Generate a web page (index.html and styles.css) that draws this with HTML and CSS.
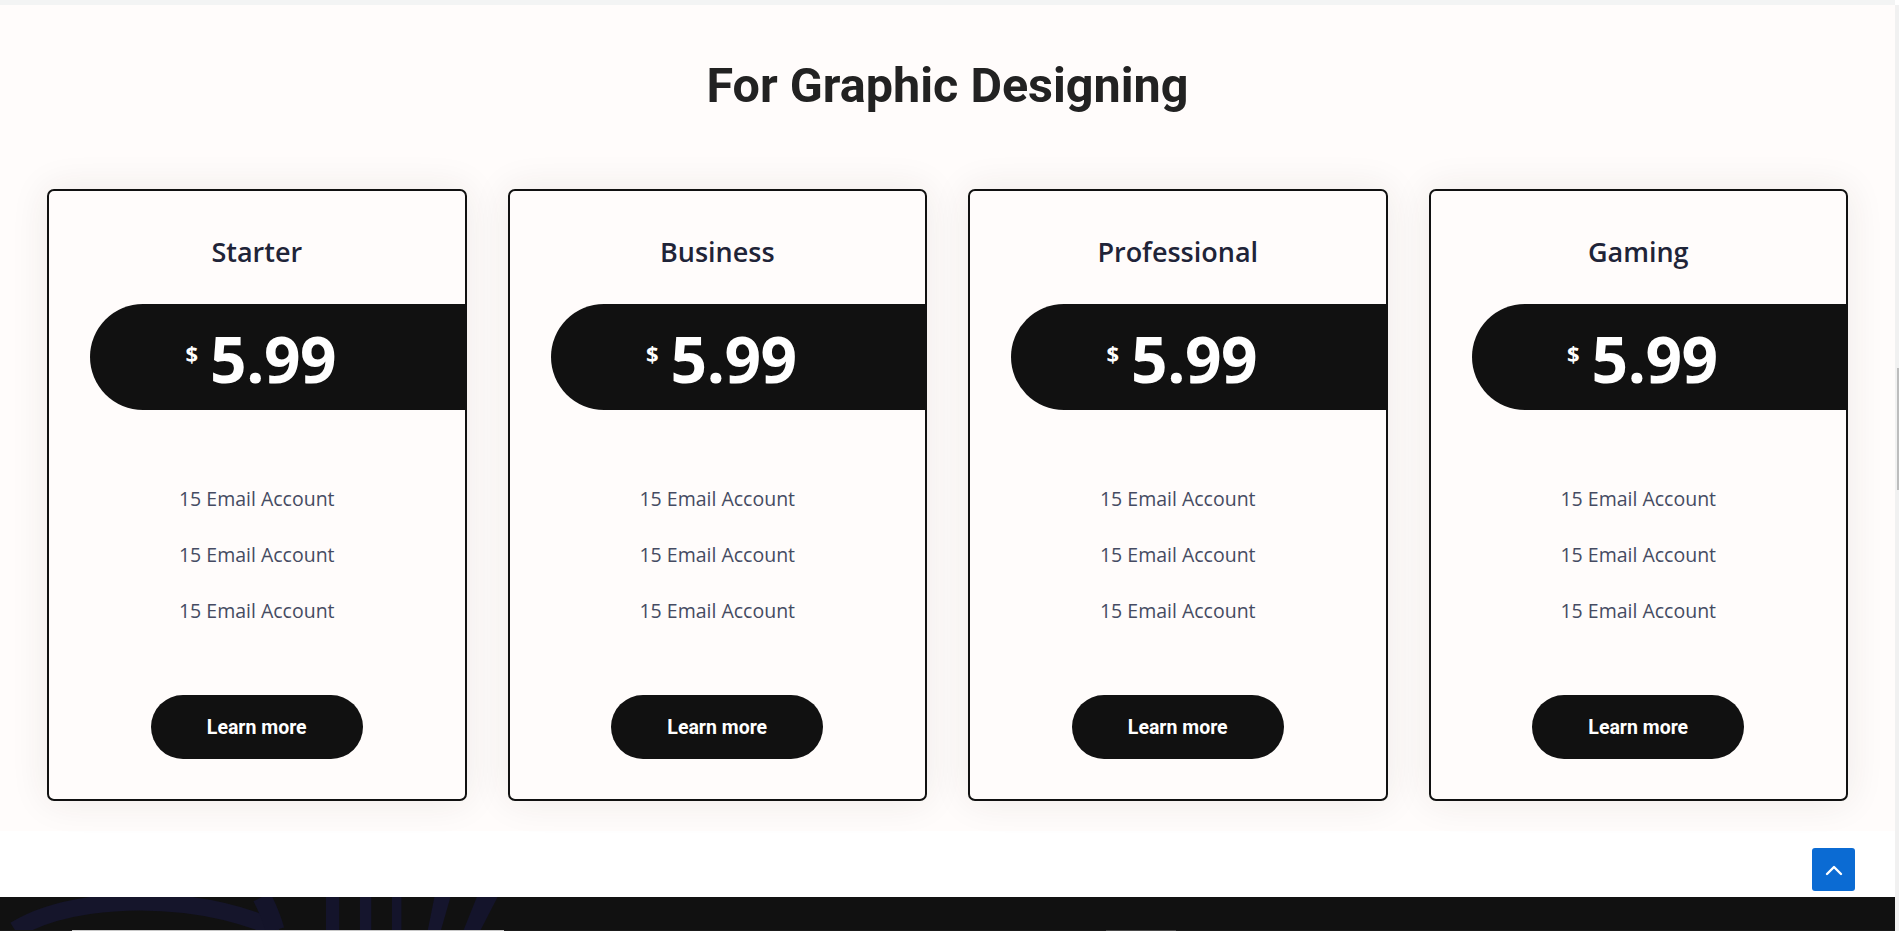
FILE: index.html
```html
<!DOCTYPE html>
<html lang="en">
<head>
<meta charset="utf-8">
<title>For Graphic Designing</title>
<link rel="stylesheet" href="styles.css">
</head>
<body>
<div class="topband"></div>
<section class="pricing">
  <h2 class="heading">For Graphic Designing</h2>
  <div class="cards">
    <div class="card">
      <h3 class="plan">Starter</h3>
      <div class="band"><span class="cur">$</span><span class="amount">5.99</span></div>
      <ul class="features">
        <li>15 Email Account</li>
        <li>15 Email Account</li>
        <li>15 Email Account</li>
      </ul>
      <a class="btn" href="#">Learn more</a>
    </div>
    <div class="card">
      <h3 class="plan">Business</h3>
      <div class="band"><span class="cur">$</span><span class="amount">5.99</span></div>
      <ul class="features">
        <li>15 Email Account</li>
        <li>15 Email Account</li>
        <li>15 Email Account</li>
      </ul>
      <a class="btn" href="#">Learn more</a>
    </div>
    <div class="card">
      <h3 class="plan">Professional</h3>
      <div class="band"><span class="cur">$</span><span class="amount">5.99</span></div>
      <ul class="features">
        <li>15 Email Account</li>
        <li>15 Email Account</li>
        <li>15 Email Account</li>
      </ul>
      <a class="btn" href="#">Learn more</a>
    </div>
    <div class="card">
      <h3 class="plan">Gaming</h3>
      <div class="band"><span class="cur">$</span><span class="amount">5.99</span></div>
      <ul class="features">
        <li>15 Email Account</li>
        <li>15 Email Account</li>
        <li>15 Email Account</li>
      </ul>
      <a class="btn" href="#">Learn more</a>
    </div>
  </div>
</section>
<div class="spacer"></div>
<footer class="footer">
  <svg class="deco" width="520" height="35" viewBox="0 0 520 35" aria-hidden="true">
    <path d="M0 35 C 40 10, 110 0, 180 8 C 230 14, 260 26, 280 35" fill="none" stroke="#15152b" stroke-width="18"/>
    <path d="M262 0 C 270 16, 274 28, 276 35" fill="none" stroke="#14142a" stroke-width="20"/>
    <rect x="330" y="0" width="14" height="35" fill="#14142b"/>
    <rect x="366" y="0" width="12" height="35" fill="#15152d"/>
    <rect x="400" y="0" width="10" height="35" fill="#14142b"/>
    <path d="M445 0 L462 0 L452 35 L438 35 Z" fill="#15152d"/>
    <path d="M490 0 L512 0 L494 35 L476 35 Z" fill="#14142b"/>
  </svg>
  <div class="footer-edge">
    <span class="edge-a"></span>
    <span class="edge-b"></span>
  </div>
</footer>
<a class="totop" href="#" aria-label="Back to top">
  <svg width="18" height="12" viewBox="0 0 18 12"><path d="M2 10 L9 3 L16 10" fill="none" stroke="#fff" stroke-width="2.4" stroke-linecap="round" stroke-linejoin="round"/></svg>
</a>
<div class="scrollbar"><div class="thumb"></div></div>
</body>
</html>
```
FILE: styles.css
```css
html, body {
  margin: 0;
  padding: 0;
  height: 100%;
  overflow: hidden;
  background: #ffffff;
}
body {
  font-family: "Open Sans", "Noto Sans", sans-serif;
  width: 1895px;
}
.topband {
  height: 5px;
  background: #f3f4f4;
}
.pricing {
  background: #fffcfb;
  padding: 52px 47px 30px;
}
.heading {
  margin: 0;
  font-family: Roboto, "Liberation Sans", sans-serif;
  font-weight: 700;
  font-size: 48.5px;
  line-height: 58px;
  color: #222222;
  text-align: center;
}
.cards {
  margin-top: 74px;
  display: grid;
  grid-template-columns: repeat(4, 1fr);
  gap: 41px;
}
.card {
  background: #fffcfb;
  border: 2px solid #111111;
  border-radius: 7px;
  box-shadow: 0 0 38px rgba(60, 40, 35, 0.09);
  display: flex;
  flex-direction: column;
  align-items: center;
  padding: 42px 0 40px;
  height: 612px;
  box-sizing: border-box;
}
.plan {
  margin: 0;
  font-weight: 600;
  font-size: 27px;
  line-height: 38px;
  color: #1f2438;
}
.band {
  align-self: stretch;
  margin: 33px 0 0 41px;
  padding-right: 33px;
  height: 106px;
  background: #111111;
  border-radius: 53px 0 0 53px;
  display: flex;
  justify-content: center;
  align-items: center;
  color: #ffffff;
  font-weight: 700;
}
.cur {
  font-size: 22px;
  line-height: 1;
  align-self: flex-start;
  margin-top: 38px;
  margin-right: 12px;
}
.amount {
  font-size: 64px;
  line-height: 1;
  letter-spacing: -0.5px;
  margin-top: 4px;
}
.features {
  list-style: none;
  margin: 75px 0 0;
  padding: 0;
  display: flex;
  flex-direction: column;
  gap: 29px;
  text-align: center;
}
.features li {
  font-size: 19.5px;
  line-height: 27px;
  color: #454b62;
}
.btn {
  margin-top: auto;
  width: 212px;
  height: 64px;
  border-radius: 32px;
  background: #111111;
  color: #ffffff;
  text-decoration: none;
  font-family: Roboto, "Liberation Sans", sans-serif;
  font-weight: 700;
  font-size: 19.5px;
  display: flex;
  align-items: center;
  justify-content: center;
}
.spacer {
  height: 66px;
  background: #ffffff;
}
.footer {
  background: #111111;
  height: 200px;
  display: flex;
  flex-direction: column;
}
.deco {
  display: block;
  height: 33px;
  width: 520px;
}
.footer-edge {
  height: 4px;
  background: #1a1a1a;
  display: flex;
}
.edge-a {
  margin-left: 72px;
  width: 432px;
  background: #c8c8c8;
}
.edge-b {
  margin-left: 602px;
  width: 70px;
  background: #4a4a4a;
}
.totop {
  position: fixed;
  right: 44px;
  bottom: 40px;
  width: 43px;
  height: 43px;
  background: #0b6bd3;
  border-radius: 3px;
  display: flex;
  align-items: center;
  justify-content: center;
}
.scrollbar {
  position: fixed;
  top: 5px;
  right: 0;
  width: 4px;
  height: 100%;
  background: #f1f1f1;
}
.thumb {
  margin-top: 363px;
  margin-left: 2px;
  width: 2px;
  height: 122px;
  background: #bdbdbd;
}
```
